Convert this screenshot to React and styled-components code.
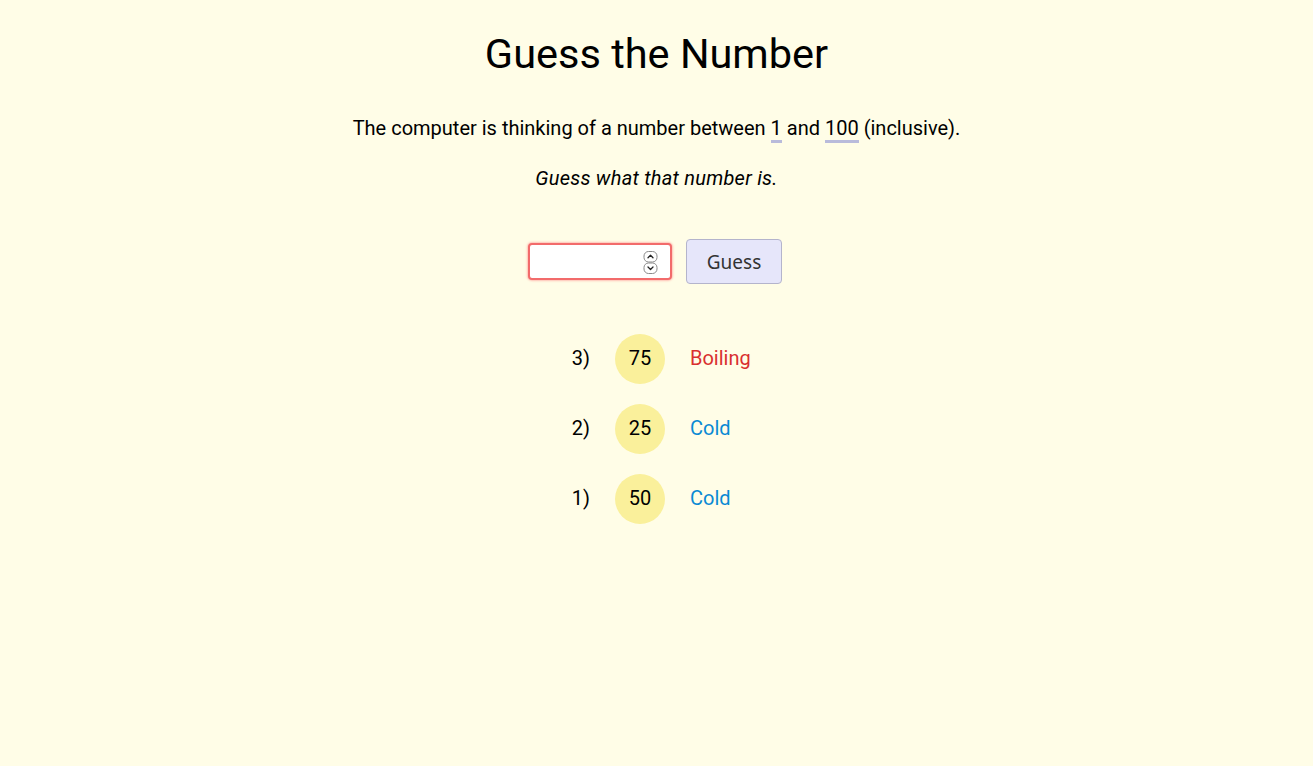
import React from "react";
import styled, { createGlobalStyle } from "styled-components";

const Global = createGlobalStyle`
  html, body { margin: 0; padding: 0; }
  body {
    background: #fffde7;
    font-family: Roboto, "Noto Sans", sans-serif;
    color: #000;
  }
`;

const Page = styled.main`
  min-height: 766px;
  display: flex;
  flex-direction: column;
  align-items: center;
  padding-top: 24px;
  box-sizing: border-box;
`;

const Title = styled.h1`
  margin: 0;
  font-size: 41.5px;
  font-weight: 400;
  line-height: 60px;
`;

const Text = styled.p`
  margin: ${(p) => p.$top}px 0 0;
  font-size: 20px;
  line-height: 30px;
  font-style: ${(p) => (p.$italic ? "italic" : "normal")};
  letter-spacing: ${(p) => (p.$italic ? "0.25px" : "0")};
`;

const Bound = styled.span`
  border-bottom: 3px solid #b9bbdb;
`;

const Form = styled.form`
  margin-top: 46px;
  display: flex;
  align-items: center;
  gap: 14px;
  margin-right: 3px;
`;

const Field = styled.div`
  position: relative;
  display: flex;
`;

const NumberInput = styled.input`
  width: 144px;
  height: 37px;
  box-sizing: border-box;
  border: 2px solid #f26b6b;
  border-radius: 4px;
  box-shadow: 0 0 2px 1px rgba(255, 120, 120, 0.45);
  background: #fff;
  outline: none;
  font-size: 18px;
  font-family: Roboto, sans-serif;
  padding: 0 30px 0 8px;
  -moz-appearance: textfield;
  &::-webkit-inner-spin-button,
  &::-webkit-outer-spin-button {
    -webkit-appearance: none;
    margin: 0;
  }
`;

const Spinner = styled.svg`
  position: absolute;
  right: 14px;
  top: 8px;
  width: 15px;
  height: 23px;
  pointer-events: none;
`;

const Button = styled.button`
  width: 96px;
  height: 45px;
  box-sizing: border-box;
  background: #e6e6fa;
  border: 1px solid #b4b4cc;
  border-radius: 4px;
  font-family: "Noto Sans", sans-serif;
  font-size: 19px;
  color: #333;
  cursor: pointer;
`;

const List = styled.ol`
  list-style: none;
  margin: 50px 0 0;
  padding: 0 33px 0 0;
  width: 100%;
  box-sizing: border-box;
  display: grid;
  grid-template-columns: 1fr 50px 1fr;
  column-gap: 25px;
  row-gap: 20px;
`;

const Row = styled.li`
  display: contents;
`;

const Index = styled.span`
  justify-self: end;
  align-self: center;
  font-size: 20px;
  line-height: 22px;
  margin-bottom: 2px;
`;

const Bubble = styled.span`
  width: 50px;
  height: 50px;
  border-radius: 50%;
  background: #faf09b;
  display: flex;
  align-items: center;
  justify-content: center;
  font-size: 20px;
  line-height: 22px;
  padding-bottom: 2px;
  box-sizing: border-box;
`;

const Verdict = styled.span`
  align-self: center;
  font-size: 20px;
  line-height: 22px;
  margin-bottom: 2px;
  color: ${(p) => (p.$hot ? "#d9302f" : "#0a8ad4")};
`;

const guesses = [
  { n: 3, value: 75, label: "Boiling", hot: true },
  { n: 2, value: 25, label: "Cold" },
  { n: 1, value: 50, label: "Cold" },
];

export default function App() {
  return (
    <>
      <Global />
      <Page>
        <Title>Guess the Number</Title>
        <Text $top={29}>
          The computer is thinking of a number between <Bound>1</Bound> and{" "}
          <Bound>100</Bound> (inclusive).
        </Text>
        <Text $top={20} $italic>
          Guess what that number is.
        </Text>
        <Form onSubmit={(e) => e.preventDefault()}>
          <Field>
            <NumberInput type="number" min="1" max="100" />
            <Spinner viewBox="0 0 15 23" aria-hidden="true">
              <rect x="1" y="0.5" width="13" height="10.5" rx="4.5" fill="#fff" stroke="#8a8a8a" />
              <rect x="1" y="12" width="13" height="10.5" rx="4.5" fill="#fff" stroke="#8a8a8a" />
              <path d="M5 6.8 L7.5 4.3 L10 6.8" fill="none" stroke="#222" strokeWidth="1.3" strokeLinecap="round" strokeLinejoin="round" />
              <path d="M5 16 L7.5 18.5 L10 16" fill="none" stroke="#222" strokeWidth="1.3" strokeLinecap="round" strokeLinejoin="round" />
            </Spinner>
          </Field>
          <Button type="submit">Guess</Button>
        </Form>
        <List>
          {guesses.map((g) => (
            <Row key={g.n}>
              <Index>{g.n})</Index>
              <Bubble>{g.value}</Bubble>
              <Verdict $hot={g.hot}>{g.label}</Verdict>
            </Row>
          ))}
        </List>
      </Page>
    </>
  );
}
